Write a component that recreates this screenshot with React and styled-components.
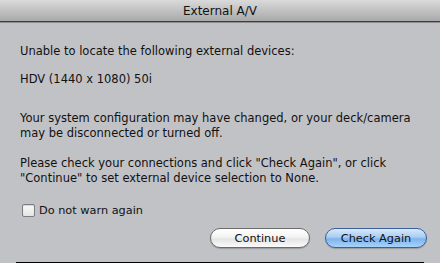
import React from "react";
import styled, { createGlobalStyle } from "styled-components";

const Global = createGlobalStyle`
  html, body { margin: 0; padding: 0; width: 440px; height: 263px; overflow: hidden; background: #c1c2c6; }
  #root { width: 440px; height: 263px; }
`;

const Dialog = styled.div`
  width: 440px;
  height: 263px;
  display: flex;
  flex-direction: column;
  background: #c1c2c6;
  font-family: "DejaVu Sans", "Liberation Sans", sans-serif;
  color: #111;
  box-sizing: border-box;
`;

const TitleBar = styled.div`
  height: 21px;
  flex: none;
  display: flex;
  align-items: center;
  justify-content: center;
  background: linear-gradient(#dadada, #a9a9a9);
  border-bottom: 1px solid #3e3e3e;
  box-shadow: 0 1px 0 #8d8e92;
  font-size: 12px;
  color: #111;
`;

const Body = styled.div`
  flex: 1;
  display: flex;
  flex-direction: column;
  padding: 22px 20px 0 20px;
  font-size: 11.5px;
  line-height: 15px;
  white-space: nowrap;
`;

const Para = styled.p`
  margin: 0 0 ${(p) => p.$gap}px 0;
`;

const CheckRow = styled.label`
  display: flex;
  align-items: center;
  gap: 4px;
  margin-left: 2px;
  font-size: 11.3px;
`;

const Box = styled.span`
  width: 11px;
  height: 11px;
  border: 1px solid #7d7d80;
  border-radius: 2px;
  background: linear-gradient(#fafafa, #e4e4e4);
  box-shadow: inset 0 1px 1px rgba(0,0,0,0.15);
`;

const ButtonRow = styled.div`
  display: flex;
  justify-content: flex-end;
  gap: 15px;
  margin-top: 10px;
  margin-right: -7px;
`;

const Button = styled.div`
  width: ${(p) => p.$w}px;
  height: 20px;
  box-sizing: border-box;
  border-radius: 10px;
  display: flex;
  align-items: center;
  justify-content: center;
  font-size: 11.3px;
  color: #111;
  border: 1px solid ${(p) => (p.$default ? "#3a5f9a" : "#6b6b6b")};
  background: ${(p) =>
    p.$default
      ? "linear-gradient(#d7e9fb 0%, #a9cdf3 45%, #7fb4ec 55%, #a7d3fb 100%)"
      : "linear-gradient(#ffffff 0%, #f3f3f3 45%, #e4e4e4 55%, #fbfbfb 100%)"};
  box-shadow: 0 1px 1px rgba(0,0,0,0.2);
`;

const BottomEdge = styled.div`
  height: 1px;
  margin: 0 16px;
  background: #000;
  flex: none;
`;

export default function App() {
  return (
    <>
      <Global />
      <Dialog>
        <TitleBar>External A/V</TitleBar>
        <Body>
          <Para $gap={13}>Unable to locate the following external devices:</Para>
          <Para $gap={24}>HDV (1440 x 1080) 50i</Para>
          <Para $gap={15}>
            Your system configuration may have changed, or your deck/camera
            <br />
            may be disconnected or turned off.
          </Para>
          <Para $gap={17}>
            Please check your connections and click "Check Again", or click
            <br />
            "Continue" to set external device selection to None.
          </Para>
          <CheckRow>
            <Box />
            Do not warn again
          </CheckRow>
          <ButtonRow>
            <Button $w={100}>Continue</Button>
            <Button $w={102} $default>Check Again</Button>
          </ButtonRow>
        </Body>
        <BottomEdge />
      </Dialog>
    </>
  );
}
